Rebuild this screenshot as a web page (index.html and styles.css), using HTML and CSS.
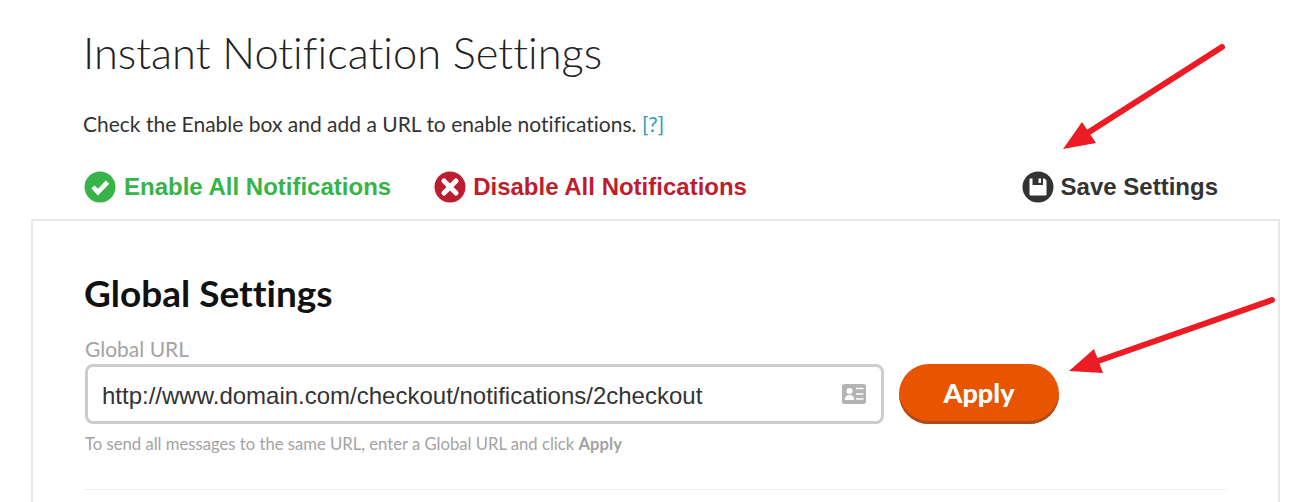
FILE: index.html
```html
<!DOCTYPE html>
<html lang="en">
<head>
    <meta charset="UTF-8">
    <title>Instant Notification Settings</title>
    <link rel="stylesheet" href="styles.css">
</head>
<body>
    <div class="page">
        <div class="page-head">
            <h1>Instant Notification Settings</h1>
            <p class="intro">Check the Enable box and add a URL to enable notifications. <a href="#">[?]</a></p>
            <div class="actions">
                <a href="#" class="action enable">
                    <svg class="action-icon" viewBox="0 0 32 32"><circle cx="16" cy="16" r="15.5" fill="#36b44a"/><path d="M9 16l5 5.200 9.500-10" fill="none" stroke="#fff" stroke-width="4.600"/></svg>
                    Enable All Notifications
                </a>
                <a href="#" class="action disable">
                    <svg class="action-icon" viewBox="0 0 32 32"><circle cx="16" cy="16" r="15.5" fill="#bc1e2f"/><path d="M10 10l12 12M22 10L10 22" fill="none" stroke="#fff" stroke-width="5" stroke-linecap="round"/></svg>
                    Disable All Notifications
                </a>
                <a href="#" class="action save">
                    <svg class="action-icon" viewBox="0 0 32 32"><circle cx="16" cy="16" r="15.5" fill="#333"/><path d="M8.500 7.500h14l2 2v14a1 1 0 0 1-1 1h-15a1 1 0 0 1-1-1v-15a1 1 0 0 1 1-1zM10.500 7.500v6.500h10.500v-6.500h-2v4.500h-2.500v-4.500z" fill="#fff" fill-rule="evenodd"/></svg>
                    Save Settings
                </a>
            </div>
        </div>

        <div class="panel">
            <h2>Global Settings</h2>
            <label for="globalUrl">Global URL</label>
            <div class="url-row">
                <div class="url-field">
                    <input type="text" id="globalUrl" value="http://www.domain.com/checkout/notifications/2checkout">
                    <svg class="card-icon" viewBox="0 0 24 20"><path d="M2.500 0h19a2.500 2.500 0 0 1 2.500 2.500v15a2.500 2.500 0 0 1-2.500 2.500h-19a2.500 2.500 0 0 1-2.500-2.500v-15a2.500 2.500 0 0 1 2.500-2.500z" fill="#b3b3b3"/><circle cx="7.500" cy="7" r="3" fill="#fff"/><path d="M2.800 16c0-3.500 2-5 4.700-5s4.700 1.500 4.700 5z" fill="#fff"/><path d="M14 4.500h7.500M14 10h7.500M14 15h7.500" stroke="#fff" stroke-width="1.700"/></svg>
                </div>
                <button type="button" class="apply-btn">Apply</button>
            </div>
            <p class="hint">To send all messages to the same URL, enter a Global URL and click <b>Apply</b></p>
            <div class="divider"></div>
        </div>

        <svg class="arrows" viewBox="0 0 1303 502">
            <path d="M1222 47L1089 132" stroke="#ed1c24" stroke-width="6" stroke-linecap="round" fill="none"/>
            <path d="M1063 149L1082 122L1096 143z" fill="#ed1c24"/>
            <path d="M1272 300L1098 361" stroke="#ed1c24" stroke-width="6" stroke-linecap="round" fill="none"/>
            <path d="M1069 371L1094 349L1103 373z" fill="#ed1c24"/>
        </svg>
    </div>
</body>
</html>
```

FILE: styles.css
```css
body { margin: 0; font-family: "Liberation Sans", Arial, sans-serif; background: #fff; color: #333; font-variant-ligatures: none; }
.page { position: relative; height: 502px; overflow: hidden; }
.page-head { padding: 0 85px 0 84px; }
h1 { margin: 0 0 0 -1px; padding-top: 24px; font-family: Lato, sans-serif; font-weight: 300; font-size: 43.4px; line-height: 56px; color: #222; }
.intro { margin: 30px 0 0 -1px; font-family: Lato, sans-serif; font-size: 21px; line-height: 28px; color: #333; }
.intro a { color: #2a9db5; text-decoration: none; }
.actions { display: flex; align-items: center; margin-top: 33px; height: 32px; }
.action { display: flex; align-items: center; gap: 8px; font-weight: bold; font-size: 24px; text-decoration: none; margin-right: 43px; }
.action-icon { width: 32px; height: 32px; flex: none; }
.enable { color: #36b44a; }
.disable { color: #bc1e2f; gap: 7px; }
.save { color: #333; margin: 0 0 0 auto; gap: 7px; }
.panel { margin: 16px 23px 0 31px; height: 400px; padding: 52px 52px 0 52px; border: 2px solid #e8e8e8; }
h2 { margin: 0 0 0 -1px; font-family: Lato, sans-serif; font-weight: 700; font-size: 37px; line-height: 39px; color: #111; }
label { display: block; margin: 25px 0 0; font-family: Lato, sans-serif; font-size: 21px; line-height: 24px; color: #a3a3a3; }
.url-row { display: flex; align-items: flex-start; gap: 16px; margin-top: 3px; }
.url-field { position: relative; flex: 0 0 799px; }
.url-field input { width: 100%; height: 60px; box-sizing: border-box; padding: 3px 60px 0 14px; border: 3px solid #ccc; border-radius: 8px; font-family: "Liberation Sans", Arial, sans-serif; font-size: 24px; color: #333; background: #fff; }
.card-icon { position: absolute; right: 18px; top: 20px; width: 24px; height: 20px; }
.apply-btn { width: 160px; height: 60px; padding: 0 0 4px; border: none; border-radius: 30px; background: #e85400; box-shadow: inset 0 -3px 0 #ad4a1c; color: #fff; font-family: Lato, sans-serif; font-weight: 900; font-size: 27px; cursor: pointer; margin-left: -1px; }
.hint { margin: 9px 0 0; font-family: Lato, sans-serif; font-size: 16.66px; line-height: 22px; color: #a3a3a3; }
.divider { margin-top: 34px; border-top: 1px dotted #ddd; }
.arrows { position: absolute; left: 0; top: 0; width: 1303px; height: 502px; pointer-events: none; }
```
